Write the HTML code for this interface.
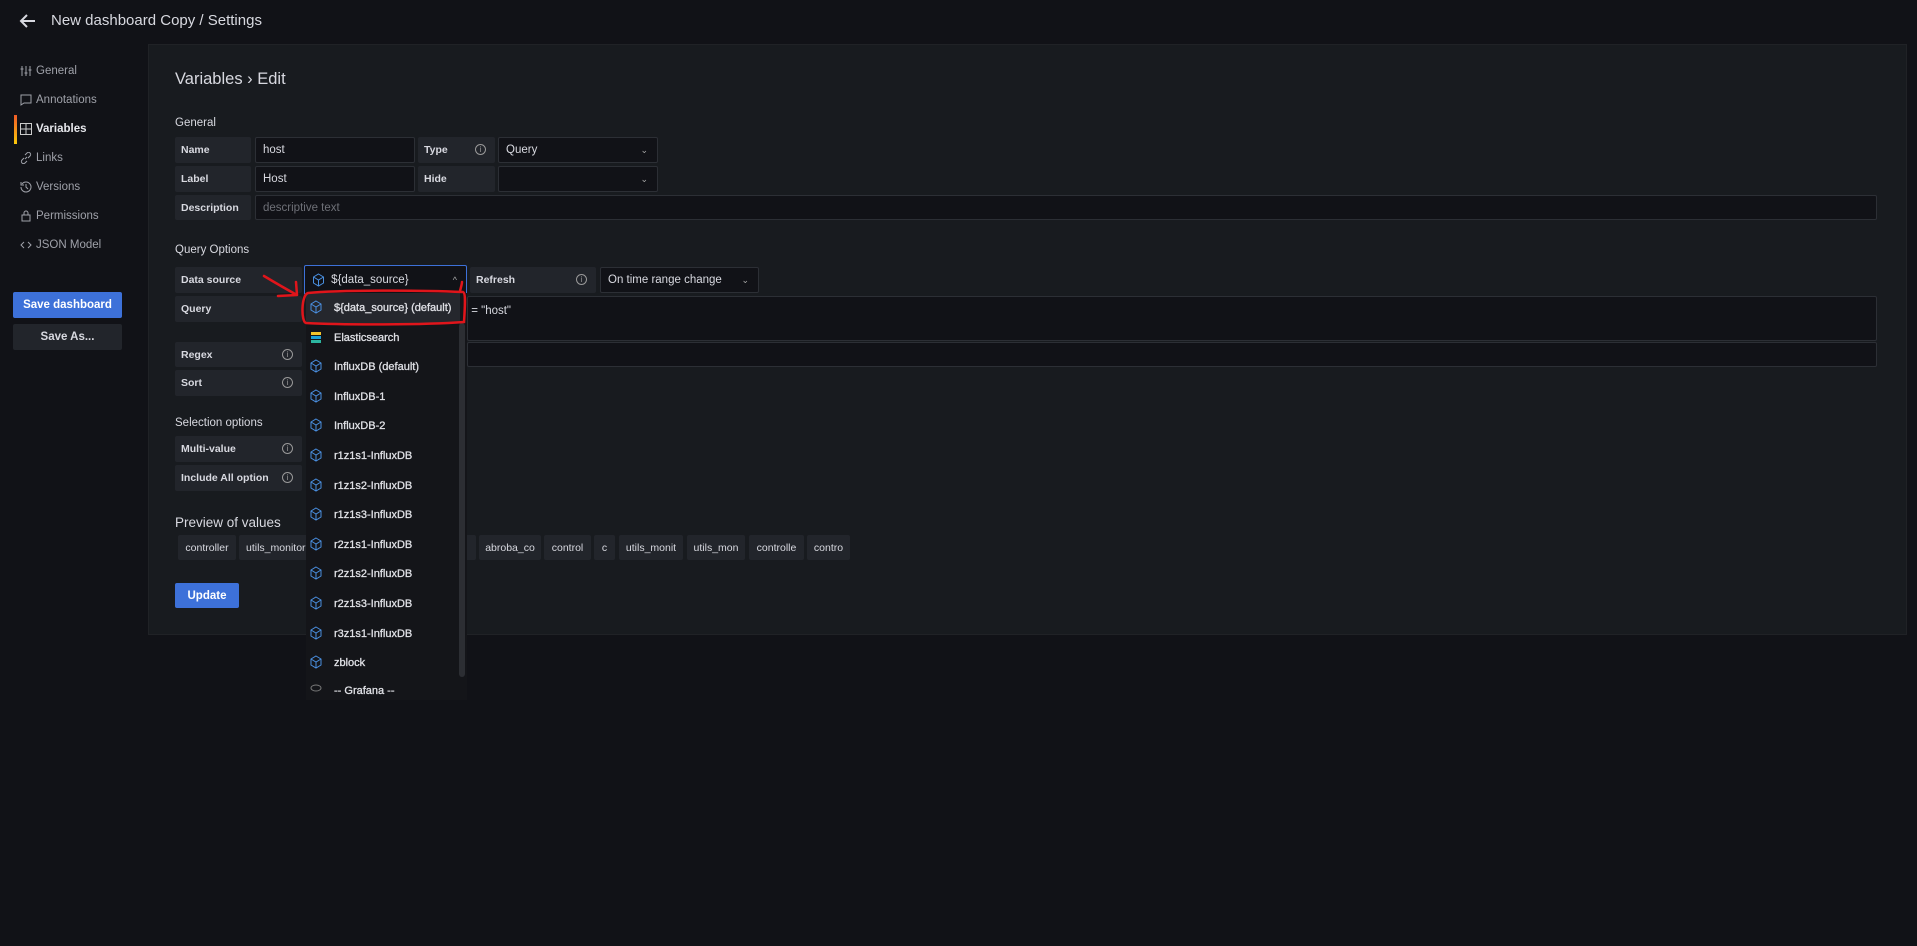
<!DOCTYPE html>
<html><head><meta charset="utf-8"><style>
*{box-sizing:border-box;margin:0;padding:0}
body{width:1917px;height:946px;background:#111217;font-family:"Liberation Sans",sans-serif;color:#ccccdc;position:relative;overflow:hidden}
.a{position:absolute;white-space:nowrap}
.title{left:51px;top:12px;font-size:15px;color:#d8d9e0}
.nav{left:36px;font-size:11.5px;color:#9fa1a9}
.nav svg{position:absolute;left:-16px;top:0px}
.panel{left:148px;top:44px;width:1759px;height:591px;background:#181b1f;border:1px solid #202226}
.lbl{background:#22252b;font-size:10.5px;font-weight:bold;color:#d8d9e0;padding-left:6px;display:flex;align-items:center;border-radius:2px}
.inp{background:#111217;border:1px solid #2c2f35;font-size:11.5px;color:#d8d9e0;padding-left:7px;display:flex;align-items:center;border-radius:2px}
.sec{font-size:11.5px;color:#d8d9e0}
.chev{position:absolute;right:9px;top:7px;font-size:9px;color:#aaa}
.info{position:absolute;right:9px;width:11px;height:11px;border:1px solid #999;border-radius:50%;font-size:8px;text-align:center;line-height:9px;color:#999;font-weight:normal}
.chip{background:#22252b;font-size:10.5px;color:#d8d9e0;height:25px;top:535px;display:flex;align-items:center;justify-content:center;border-radius:2px;overflow:hidden}
.btn{background:#3d71d9;color:#fff;font-size:11.5px;font-weight:bold;display:flex;align-items:center;justify-content:center;border-radius:2px}
.dd{left:306px;top:293px;width:161px;height:407px;background:#141519;overflow:hidden}
.it{position:absolute;left:0;width:154px;height:30px;font-size:11px;color:#e0e1e6;padding-left:28px;display:flex;align-items:center;white-space:nowrap;-webkit-text-stroke:0.3px #e0e1e6}
</style></head><body>
<svg class="a" style="left:19px;top:13px" width="17" height="16" viewBox="0 0 17 16"><path d="M16 8H2M8 2L2 8l6 6" stroke="#d8d9e0" stroke-width="2" fill="none"/></svg>
<div class="a title">New dashboard Copy / Settings</div>

<div class="a nav" style="top:65px"><svg width="12" height="12" viewBox="0 0 12 12" stroke="#9fa1a9" fill="none"><path d="M2 1v10M6 1v10M10 1v10M0.5 4h3M4.5 8h3M8.5 5h3"/></svg>General</div>
<div class="a nav" style="top:94px"><svg width="12" height="12" viewBox="0 0 12 12" stroke="#9fa1a9" fill="none"><path d="M1 1h10v8H4L1 11z"/></svg>Annotations</div>
<div class="a" style="left:14px;top:115px;width:3px;height:29px;background:linear-gradient(#f05a28,#fbca0a)"></div>
<div class="a nav" style="top:123px;color:#e6e7ec;font-weight:bold"><svg width="12" height="12" viewBox="0 0 12 12" stroke="#ccc" fill="none"><rect x="0.5" y="0.5" width="11" height="11"/><path d="M6 0v12M0 6h12"/></svg>Variables</div>
<div class="a nav" style="top:152px"><svg width="12" height="12" viewBox="0 0 12 12" stroke="#9fa1a9" fill="none"><path d="M5 7l2-2M4 6L2 8a2 2 0 003 3l2-2M8 6l2-2a2 2 0 00-3-3L5 3"/></svg>Links</div>
<div class="a nav" style="top:181px"><svg width="12" height="12" viewBox="0 0 12 12" stroke="#9fa1a9" fill="none"><path d="M2 3a5 5 0 11-1 3M1 1v3h3M6 3v3l2 2"/></svg>Versions</div>
<div class="a nav" style="top:210px"><svg width="12" height="12" viewBox="0 0 12 12" stroke="#9fa1a9" fill="none"><rect x="2" y="5" width="8" height="6"/><path d="M4 5V3a2 2 0 014 0v2"/></svg>Permissions</div>
<div class="a nav" style="top:239px"><svg width="12" height="12" viewBox="0 0 12 12" stroke="#9fa1a9" fill="none"><path d="M4 3L1 6l3 3M8 3l3 3-3 3"/></svg>JSON Model</div>
<div class="a btn" style="left:13px;top:292px;width:109px;height:26px">Save dashboard</div>
<div class="a btn" style="left:13px;top:324px;width:109px;height:26px;background:#22252b;color:#d8d9e0">Save As...</div>

<div class="a panel"></div>
<div class="a" style="left:175px;top:70px;font-size:16.5px;color:#d8d9e0">Variables › Edit</div>
<div class="a sec" style="left:175px;top:117px">General</div>
<div class="a lbl" style="left:175px;top:137px;width:76px;height:26px">Name</div>
<div class="a inp" style="left:255px;top:137px;width:160px;height:26px">host</div>
<div class="a lbl" style="left:418px;top:137px;width:77px;height:26px">Type<span class="info" style="top:7px">i</span></div>
<div class="a inp" style="left:498px;top:137px;width:160px;height:26px">Query<span class="chev">⌄</span></div>
<div class="a lbl" style="left:175px;top:166px;width:76px;height:26px">Label</div>
<div class="a inp" style="left:255px;top:166px;width:160px;height:26px">Host</div>
<div class="a lbl" style="left:418px;top:166px;width:77px;height:26px">Hide</div>
<div class="a inp" style="left:498px;top:166px;width:160px;height:26px"><span class="chev">⌄</span></div>
<div class="a lbl" style="left:175px;top:195px;width:76px;height:25px">Description</div>
<div class="a inp" style="left:255px;top:195px;width:1622px;height:25px;color:#6e7077">descriptive text</div>

<div class="a sec" style="left:175px;top:244px">Query Options</div>
<div class="a lbl" style="left:175px;top:267px;width:127px;height:26px">Data source</div>
<div class="a inp" style="left:304px;top:265px;width:163px;height:30px;border-color:#3d71d9">&nbsp;&nbsp;&nbsp;&nbsp;&nbsp;&nbsp;${data_source}<span class="chev" style="top:9px">^</span></div>
<svg class="a" style="left:312px;top:273px" width="13" height="14" viewBox="0 0 13 14" stroke="#4a8fe0" fill="none"><path d="M6.5 1l5 3v6l-5 3-5-3V4zM1.5 4l5 3 5-3M6.5 7v6"/></svg>
<div class="a lbl" style="left:470px;top:267px;width:126px;height:26px">Refresh<span class="info" style="top:7px">i</span></div>
<div class="a inp" style="left:600px;top:267px;width:159px;height:26px">On time range change<span class="chev">⌄</span></div>
<div class="a lbl" style="left:175px;top:296px;width:127px;height:26px">Query</div>
<div class="a inp" style="left:467px;top:296px;width:1410px;height:45px;align-items:flex-start;padding-top:8px;padding-left:0">&nbsp;= "host"</div>
<div class="a lbl" style="left:175px;top:342px;width:127px;height:25px">Regex<span class="info" style="top:7px">i</span></div>
<div class="a inp" style="left:467px;top:342px;width:1410px;height:25px"></div>
<div class="a lbl" style="left:175px;top:370px;width:127px;height:26px">Sort<span class="info" style="top:7px">i</span></div>

<div class="a sec" style="left:175px;top:417px">Selection options</div>
<div class="a lbl" style="left:175px;top:436px;width:127px;height:26px">Multi-value<span class="info" style="top:7px">i</span></div>
<div class="a lbl" style="left:175px;top:465px;width:127px;height:26px">Include All option<span class="info" style="top:7px">i</span></div>
<div class="a" style="left:175px;top:515px;font-size:13.5px;color:#d8d9e0">Preview of values</div>
<div class="a chip" style="left:178px;width:58px">controller</div>
<div class="a chip" style="left:239px;width:80px;justify-content:flex-start;padding-left:7px">utils_monitori</div>
<div class="a chip" style="left:440px;width:36px"></div>
<div class="a chip" style="left:479px;width:62px">abroba_co</div>
<div class="a chip" style="left:544px;width:47px">control</div>
<div class="a chip" style="left:594px;width:21px">c</div>
<div class="a chip" style="left:619px;width:64px">utils_monit</div>
<div class="a chip" style="left:687px;width:58px">utils_mon</div>
<div class="a chip" style="left:749px;width:55px">controlle</div>
<div class="a chip" style="left:807px;width:43px">contro</div>
<div class="a btn" style="left:175px;top:583px;width:64px;height:25px">Update</div>

<div class="a dd">
<div class="it" style="top:0;background:#25272d">${data_source} (default)</div>
<div class="it" style="top:30px">Elasticsearch</div>
<div class="it" style="top:59px">InfluxDB (default)</div>
<div class="it" style="top:89px">InfluxDB-1</div>
<div class="it" style="top:118px">InfluxDB-2</div>
<div class="it" style="top:148px">r1z1s1-InfluxDB</div>
<div class="it" style="top:178px">r1z1s2-InfluxDB</div>
<div class="it" style="top:207px">r1z1s3-InfluxDB</div>
<div class="it" style="top:237px">r2z1s1-InfluxDB</div>
<div class="it" style="top:266px">r2z1s2-InfluxDB</div>
<div class="it" style="top:296px">r2z1s3-InfluxDB</div>
<div class="it" style="top:326px">r3z1s1-InfluxDB</div>
<div class="it" style="top:355px">zblock</div>
<div class="it" style="top:384px;height:20px;overflow:hidden;align-items:flex-end">-- Grafana --</div>
<div class="a" style="left:153px;top:30px;width:6px;height:354px;background:#2c2e33;border-radius:3px"></div>
</div>
<svg class="a" style="left:306px;top:293px" width="20" height="400" viewBox="0 0 20 400" fill="none" stroke="#4a8fe0">
<path d="M10 8l5 3v6l-5 3-5-3v-6zM5 11l5 3 5-3M10 14v6"/>
<path d="M10 67l5 3v6l-5 3-5-3v-6zM5 70l5 3 5-3M10 73v6"/>
<path d="M10 97l5 3v6l-5 3-5-3v-6zM5 100l5 3 5-3M10 103v6"/>
<path d="M10 126l5 3v6l-5 3-5-3v-6zM5 129l5 3 5-3M10 132v6"/>
<path d="M10 156l5 3v6l-5 3-5-3v-6zM5 159l5 3 5-3M10 162v6"/>
<path d="M10 186l5 3v6l-5 3-5-3v-6zM5 189l5 3 5-3M10 192v6"/>
<path d="M10 215l5 3v6l-5 3-5-3v-6zM5 218l5 3 5-3M10 221v6"/>
<path d="M10 245l5 3v6l-5 3-5-3v-6zM5 248l5 3 5-3M10 251v6"/>
<path d="M10 274l5 3v6l-5 3-5-3v-6zM5 277l5 3 5-3M10 280v6"/>
<path d="M10 304l5 3v6l-5 3-5-3v-6zM5 307l5 3 5-3M10 310v6"/>
<path d="M10 334l5 3v6l-5 3-5-3v-6zM5 337l5 3 5-3M10 340v6"/>
<path d="M10 363l5 3v6l-5 3-5-3v-6zM5 366l5 3 5-3M10 369v6"/>
<rect x="5" y="39" width="10" height="3" fill="#f3c32b" stroke="none"/><rect x="5" y="43" width="10" height="3" fill="#1ba0d8" stroke="none"/><rect x="5" y="47" width="10" height="3" fill="#2cb5a0" stroke="none"/>
<ellipse cx="10" cy="395" rx="5" ry="3" stroke="#777"/>
</svg>
<svg class="a" style="left:0;top:0" width="600" height="400" fill="none" stroke="#e0151b" stroke-width="2.5" stroke-linecap="round">
<path d="M264 276c10 6 22 13 33 19M297 295l-1-13M297 295l-19 1"/>
<path d="M308 293c30-3 110-3 155-1 3 1 2 14 1 30-40 3-120 3-158 1-5-1-5-28 2-30z"/>
<path d="M460 291c1-4 2-7 2-9"/>
</svg>
</body></html>
